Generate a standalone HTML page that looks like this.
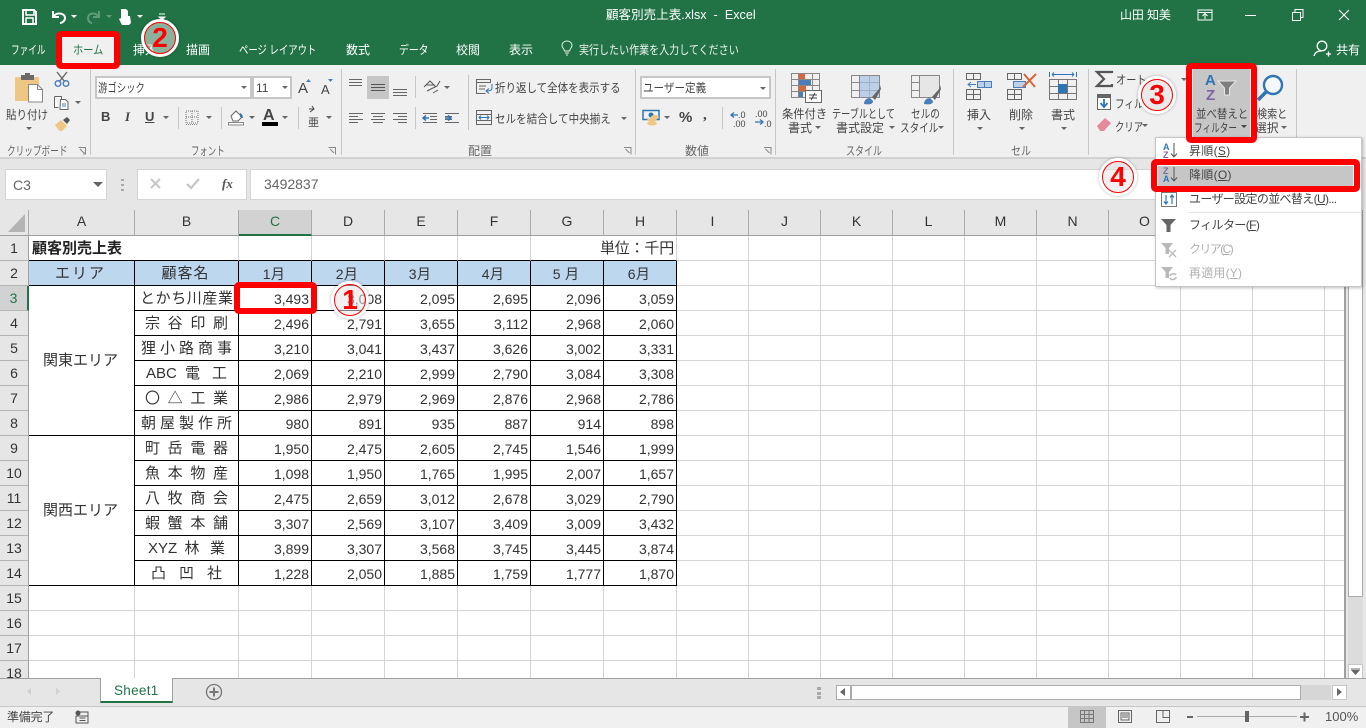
<!DOCTYPE html>
<html lang="ja"><head><meta charset="utf-8"><title>顧客別売上表.xlsx - Excel</title>
<style>
*{box-sizing:border-box}
html,body{margin:0;padding:0;width:1366px;height:728px;overflow:hidden;background:#fff}
body{position:relative;font-family:"Liberation Sans","Noto Sans CJK JP",sans-serif;color:#444}
.a{position:absolute}
.t{position:absolute;white-space:nowrap;font-size:12px;line-height:16px;color:#444;letter-spacing:-.6px;transform-origin:0 0}
.x{letter-spacing:0}
.w{color:#fff}
.h{position:absolute;top:210px;height:26px;background:#e6e6e6;border-right:1px solid #ababab;border-bottom:1px solid #9f9f9f;text-align:center;font-size:14px;line-height:23px;color:#333}
.r{position:absolute;left:0;width:29px;height:25px;background:#e6e6e6;border-right:1px solid #9f9f9f;border-bottom:1px solid #b4b4b4;text-align:center;font-size:14px;line-height:24px;color:#333}
table{position:absolute;left:29px;top:236px;border-collapse:separate;border-spacing:0;table-layout:fixed;width:1316px;font-size:14px;color:#333}
td{height:25px;padding:1px 2px 0 0;border-right:1px solid #d4d4d4;border-bottom:1px solid #d4d4d4;white-space:nowrap;line-height:20px;overflow:visible}
td.k{border-right:1px solid #000;border-bottom:1px solid #000;text-align:right}
td.hd{background:#bdd7ee;text-align:center;border-right:1px solid #000;border-bottom:1px solid #000;letter-spacing:.3px}
td.j{text-align:justify;text-align-last:justify;border-right:1px solid #000;border-bottom:1px solid #000;font-size:15px}
td.ar{border-right:1px solid #000;border-bottom:1px solid #000;text-align:center;font-size:15px;letter-spacing:0}
.red{position:absolute;border:6px solid #f00;border-radius:5px}
.bd{position:absolute;width:38px;height:38px;border-radius:50%;background:rgba(230,230,230,.55);border:3px solid #fff;box-shadow:0 0 3px rgba(0,0,0,.3);text-align:center;font:bold 28px/30px "Liberation Sans",sans-serif;color:#f00}
.bd i{position:absolute;left:0;top:0;width:32px;height:32px;border:1.5px solid #f00;border-radius:50%;display:block;font-style:normal;line-height:29px}
.sep{position:absolute;width:1px;background:#c6c6c6}
.box{position:absolute;background:#fff;border:2px solid #c6c6c6}
</style></head><body>

<!-- title + tabs -->
<div class="a" style="left:0;top:0;width:1366px;height:65px;background:#217346"></div>
<div class="a" style="left:62px;top:37px;width:52px;height:28px;background:#f0f0f0"></div>
<span class="t w" style="left:606px;top:7px;font-size:12.5px;letter-spacing:.05px">顧客別売上表.xlsx&nbsp; -&nbsp; Excel</span>
<span class="t w" style="left:1120px;top:7px;letter-spacing:-.1px">山田 知美</span>
<span class="t w x" style="left:11px;top:42px;transform:scaleX(.72)">ファイル</span>
<span class="t x" style="left:73px;top:42px;color:#217346;transform:scaleX(.85)">ホーム</span>
<span class="t w x" style="left:133px;top:42px">挿入</span>
<span class="t w x" style="left:186px;top:42px">描画</span>
<span class="t w x" style="left:239px;top:42px;transform:scaleX(.78)">ページ レイアウト</span>
<span class="t w x" style="left:346px;top:42px">数式</span>
<span class="t w x" style="left:399px;top:42px;transform:scaleX(.82)">データ</span>
<span class="t w x" style="left:456px;top:42px">校閲</span>
<span class="t w x" style="left:509px;top:42px">表示</span>
<span class="t w x" style="left:579px;top:42px;transform:scaleX(.835);opacity:.92">実行したい作業を入力してください</span>
<span class="t w x" style="left:1336px;top:42px">共有</span>

<!-- ribbon -->
<div class="a" style="left:0;top:65px;width:1366px;height:94px;background:#f0f0f0;border-bottom:2px solid #d2d2d2"></div>
<div class="a" style="left:0;top:159px;width:1366px;height:51px;background:#e6e6e6"></div>
<div class="sep" style="left:90px;top:69px;height:86px"></div>
<div class="sep" style="left:341px;top:69px;height:86px"></div>
<div class="sep" style="left:635px;top:69px;height:86px"></div>
<div class="sep" style="left:775px;top:69px;height:86px"></div>
<div class="sep" style="left:953px;top:69px;height:86px"></div>
<div class="sep" style="left:1088px;top:69px;height:86px"></div>
<div class="sep" style="left:1296px;top:69px;height:86px"></div>
<div class="sep" style="left:178px;top:107px;height:22px"></div>
<div class="sep" style="left:221px;top:107px;height:22px"></div>
<div class="sep" style="left:298px;top:107px;height:22px"></div>
<div class="sep" style="left:415px;top:76px;height:22px"></div>
<div class="sep" style="left:415px;top:107px;height:22px"></div>
<div class="sep" style="left:468px;top:75px;height:55px"></div>
<div class="sep" style="left:722px;top:107px;height:22px"></div>
<div class="a" style="left:367px;top:76px;width:22px;height:23px;background:#c6c6c6"></div>
<div class="box" style="left:95px;top:76px;width:157px;height:23px"></div>
<div class="box" style="left:252px;top:76px;width:40px;height:23px"></div>
<div class="box" style="left:640px;top:76px;width:131px;height:23px"></div>
<span class="t x" style="left:98px;top:80px;transform:scaleX(.78)">游ゴシック</span>
<span class="t x" style="left:256px;top:80px">11</span>
<span class="t x" style="left:643px;top:80px;transform:scaleX(.88)">ユーザー定義</span>
<span class="t x" style="left:6px;top:107px;transform:scaleX(.875)">貼り付け</span>
<span class="t x" style="left:7px;top:143px;color:#666;transform:scaleX(.72)">クリップボード</span>
<span class="t x" style="left:191px;top:143px;color:#666;transform:scaleX(.7)">フォント</span>
<span class="t x" style="left:468px;top:143px;color:#666">配置</span>
<span class="t x" style="left:685px;top:143px;color:#666">数値</span>
<span class="t x" style="left:846px;top:143px;color:#666;transform:scaleX(.75)">スタイル</span>
<span class="t x" style="left:1011px;top:143px;color:#666;transform:scaleX(.83)">セル</span>
<span class="a" style="left:101px;top:110px;font:bold 13px/14px 'Liberation Sans';color:#444">B</span>
<span class="a" style="left:125px;top:110px;font:italic bold 13px/14px 'Liberation Serif';color:#444">I</span>
<span class="a" style="left:145px;top:110px;font:bold 13px/14px 'Liberation Sans';color:#444;text-decoration:underline">U</span>
<span class="a" style="left:298px;top:79px;font:15px/20px 'Liberation Sans';color:#444">A</span>
<span class="a" style="left:321px;top:81px;font:13px/18px 'Liberation Sans';color:#444">A</span>
<span class="a" style="left:263px;top:107px;font:bold 16px/17px 'Liberation Sans';color:#444">A</span>
<span class="a" style="left:308px;top:116px;font:11px/12px 'Noto Sans CJK JP';color:#444">亜</span>
<span class="t x" style="left:495px;top:80px;transform:scaleX(.875)">折り返して全体を表示する</span>
<span class="t x" style="left:495px;top:111px;transform:scaleX(.88)">セルを結合して中央揃え</span>
<span class="t" style="left:679px;top:110px;font:bold 15px/16px 'Liberation Sans';letter-spacing:0">%</span>
<span class="t" style="left:703px;top:107px;font:bold 15px/16px 'Liberation Serif';letter-spacing:0">,</span>
<span class="t x" style="left:782px;top:106px;transform:scaleX(.94)">条件付き</span>
<span class="t x" style="left:788px;top:120px">書式</span>
<span class="t x" style="left:832px;top:106px;transform:scaleX(.76)">テーブルとして</span>
<span class="t x" style="left:836px;top:120px">書式設定</span>
<span class="t x" style="left:911px;top:106px;transform:scaleX(.8)">セルの</span>
<span class="t x" style="left:900px;top:120px;transform:scaleX(.8)">スタイル</span>
<span class="t x" style="left:967px;top:107px">挿入</span>
<span class="t x" style="left:1009px;top:107px">削除</span>
<span class="t x" style="left:1051px;top:107px">書式</span>
<span class="t x" style="left:1116px;top:72px;transform:scaleX(.85)">オート</span>
<span class="t x" style="left:1115px;top:96px;transform:scaleX(.8)">フィル</span>
<span class="t x" style="left:1115px;top:119px;transform:scaleX(.78)">クリア</span>
<span class="t x" style="left:1257px;top:106px;transform:scaleX(.84)">検索と</span>
<span class="t x" style="left:1255px;top:120px;transform:scaleX(.98)">選択</span>

<!-- formula bar -->
<div class="a" style="left:5px;top:169px;width:102px;height:31px;background:#fff;border:1px solid #d4d4d4"></div>
<span class="t" style="left:13px;top:177px;font-size:14px;letter-spacing:0;color:#666">C3</span>
<div class="a" style="left:137px;top:169px;width:110px;height:31px;background:#fff;border:1px solid #d4d4d4"></div>
<div class="a" style="left:250px;top:169px;width:1095px;height:31px;background:#fff;border:1px solid #d4d4d4"></div>
<span class="t" style="left:264px;top:176px;font-size:14px;letter-spacing:0;color:#666">3492837</span>
<span class="a" style="left:222px;top:176px;font:italic bold 13px/16px 'Liberation Serif';color:#555">fx</span>

<!-- column headers -->
<div class="h" style="left:0;width:29px"></div>
<div class="h" style="left:29px;width:106px">A</div>
<div class="h" style="left:135px;width:104px">B</div>
<div class="h" style="left:239px;width:73px;background:#d2d2d2;color:#217346;border-bottom:2px solid #217346">C</div>
<div class="h" style="left:312px;width:73px">D</div>
<div class="h" style="left:385px;width:73px">E</div>
<div class="h" style="left:458px;width:73px">F</div>
<div class="h" style="left:531px;width:73px">G</div>
<div class="h" style="left:604px;width:73px">H</div>
<div class="h" style="left:677px;width:72px">I</div>
<div class="h" style="left:749px;width:72px">J</div>
<div class="h" style="left:821px;width:72px">K</div>
<div class="h" style="left:893px;width:72px">L</div>
<div class="h" style="left:965px;width:72px">M</div>
<div class="h" style="left:1037px;width:72px">N</div>
<div class="h" style="left:1109px;width:72px">O</div>
<div class="h" style="left:1181px;width:72px">P</div>
<div class="h" style="left:1253px;width:72px">Q</div>
<div class="h" style="left:1325px;width:21px"></div>

<!-- row headers -->
<div class="r" style="top:236px">1</div><div class="r" style="top:261px">2</div>
<div class="r" style="top:286px;background:#d2d2d2;color:#217346;border-right:2px solid #217346">3</div>
<div class="r" style="top:311px">4</div><div class="r" style="top:336px">5</div><div class="r" style="top:361px">6</div>
<div class="r" style="top:386px">7</div><div class="r" style="top:411px">8</div><div class="r" style="top:436px">9</div>
<div class="r" style="top:461px">10</div><div class="r" style="top:486px">11</div><div class="r" style="top:511px">12</div>
<div class="r" style="top:536px">13</div><div class="r" style="top:561px">14</div><div class="r" style="top:586px">15</div>
<div class="r" style="top:611px">16</div><div class="r" style="top:636px">17</div><div class="r" style="top:661px">18</div>

<!-- sheet grid -->
<table><colgroup><col style="width:106px"><col style="width:104px"><col style="width:73px"><col style="width:73px"><col style="width:73px"><col style="width:73px"><col style="width:73px"><col style="width:73px"><col style="width:72px"><col style="width:72px"><col style="width:72px"><col style="width:72px"><col style="width:72px"><col style="width:72px"><col style="width:72px"><col style="width:72px"><col style="width:92px"></colgroup>
<tr><td style="border-bottom:1px solid #000;border-right:0;padding-left:3px;font-weight:bold;font-size:15px;color:#222">顧客別売上表</td><td style="border-bottom:1px solid #000"></td><td style="border-bottom:1px solid #000"></td><td style="border-bottom:1px solid #000"></td><td style="border-bottom:1px solid #000"></td><td style="border-bottom:1px solid #000"></td><td style="border-bottom:1px solid #000;border-right:0"></td><td style="border-bottom:1px solid #000"></td><td></td><td></td><td></td><td></td><td></td><td></td><td></td><td></td><td></td></tr>
<tr><td class="hd" style="letter-spacing:2px;font-size:15px">エリア</td><td class="hd" style="letter-spacing:1px;font-size:15px">顧客名</td><td class="hd">1月</td><td class="hd">2月</td><td class="hd">3月</td><td class="hd">4月</td><td class="hd">5 月</td><td class="hd">6月</td><td></td><td></td><td></td><td></td><td></td><td></td><td></td><td></td><td></td></tr>
<tr><td class="ar" rowspan="6">関東エリア</td><td class="j" style="padding:1px 5px 0">とかち川産業</td><td class="k">3,493</td><td class="k">3,008</td><td class="k">2,095</td><td class="k">2,695</td><td class="k">2,096</td><td class="k">3,059</td><td></td><td></td><td></td><td></td><td></td><td></td><td></td><td></td><td></td></tr>
<tr><td class="j" style="padding:1px 10px 0">宗谷印刷</td><td class="k">2,496</td><td class="k">2,791</td><td class="k">3,655</td><td class="k">3,112</td><td class="k">2,968</td><td class="k">2,060</td><td></td><td></td><td></td><td></td><td></td><td></td><td></td><td></td><td></td></tr>
<tr><td class="j" style="padding:1px 6px 0">狸小路商事</td><td class="k">3,210</td><td class="k">3,041</td><td class="k">3,437</td><td class="k">3,626</td><td class="k">3,002</td><td class="k">3,331</td><td></td><td></td><td></td><td></td><td></td><td></td><td></td><td></td><td></td></tr>
<tr><td class="j" style="padding:1px 11px 0">ABC 電 工</td><td class="k">2,069</td><td class="k">2,210</td><td class="k">2,999</td><td class="k">2,790</td><td class="k">3,084</td><td class="k">3,308</td><td></td><td></td><td></td><td></td><td></td><td></td><td></td><td></td><td></td></tr>
<tr><td class="j" style="padding:1px 10px 0">〇△工業</td><td class="k">2,986</td><td class="k">2,979</td><td class="k">2,969</td><td class="k">2,876</td><td class="k">2,968</td><td class="k">2,786</td><td></td><td></td><td></td><td></td><td></td><td></td><td></td><td></td><td></td></tr>
<tr><td class="j" style="padding:1px 6px 0">朝屋製作所</td><td class="k">980</td><td class="k">891</td><td class="k">935</td><td class="k">887</td><td class="k">914</td><td class="k">898</td><td></td><td></td><td></td><td></td><td></td><td></td><td></td><td></td><td></td></tr>
<tr><td class="ar" rowspan="6">関西エリア</td><td class="j" style="padding:1px 10px 0">町岳電器</td><td class="k">1,950</td><td class="k">2,475</td><td class="k">2,605</td><td class="k">2,745</td><td class="k">1,546</td><td class="k">1,999</td><td></td><td></td><td></td><td></td><td></td><td></td><td></td><td></td><td></td></tr>
<tr><td class="j" style="padding:1px 10px 0">魚本物産</td><td class="k">1,098</td><td class="k">1,950</td><td class="k">1,765</td><td class="k">1,995</td><td class="k">2,007</td><td class="k">1,657</td><td></td><td></td><td></td><td></td><td></td><td></td><td></td><td></td><td></td></tr>
<tr><td class="j" style="padding:1px 10px 0">八牧商会</td><td class="k">2,475</td><td class="k">2,659</td><td class="k">3,012</td><td class="k">2,678</td><td class="k">3,029</td><td class="k">2,790</td><td></td><td></td><td></td><td></td><td></td><td></td><td></td><td></td><td></td></tr>
<tr><td class="j" style="padding:1px 10px 0">蝦蟹本舗</td><td class="k">3,307</td><td class="k">2,569</td><td class="k">3,107</td><td class="k">3,409</td><td class="k">3,009</td><td class="k">3,432</td><td></td><td></td><td></td><td></td><td></td><td></td><td></td><td></td><td></td></tr>
<tr><td class="j" style="padding:1px 13px 0">XYZ 林 業</td><td class="k">3,899</td><td class="k">3,307</td><td class="k">3,568</td><td class="k">3,745</td><td class="k">3,445</td><td class="k">3,874</td><td></td><td></td><td></td><td></td><td></td><td></td><td></td><td></td><td></td></tr>
<tr><td class="j" style="padding:1px 16px 0">凸凹社</td><td class="k">1,228</td><td class="k">2,050</td><td class="k">1,885</td><td class="k">1,759</td><td class="k">1,777</td><td class="k">1,870</td><td></td><td></td><td></td><td></td><td></td><td></td><td></td><td></td><td></td></tr>
<tr><td></td><td></td><td></td><td></td><td></td><td></td><td></td><td></td><td></td><td></td><td></td><td></td><td></td><td></td><td></td><td></td><td></td></tr>
<tr><td></td><td></td><td></td><td></td><td></td><td></td><td></td><td></td><td></td><td></td><td></td><td></td><td></td><td></td><td></td><td></td><td></td></tr>
<tr><td></td><td></td><td></td><td></td><td></td><td></td><td></td><td></td><td></td><td></td><td></td><td></td><td></td><td></td><td></td><td></td><td></td></tr>
<tr><td></td><td></td><td></td><td></td><td></td><td></td><td></td><td></td><td></td><td></td><td></td><td></td><td></td><td></td><td></td><td></td><td></td></tr>
</table>
<span class="t" style="left:600px;top:239px;font-size:15px;line-height:20px;letter-spacing:-.2px;color:#333">単位：千円</span>
<div class="a" style="left:1324px;top:235px;width:1px;height:445px;background:#d4d4d4"></div>

<!-- scroll gutter, bottom bars -->
<div class="a" style="left:1344px;top:210px;width:22px;height:470px;background:#e6e6e6;border-left:2px solid #a0a0a0"></div>
<div class="a" style="left:1348px;top:210px;width:15px;height:387px;background:#fff;border:1px solid #ababab"></div>
<div class="a" style="left:1348px;top:597px;width:15px;height:67px;background:#dcdcdc"></div>
<div class="a" style="left:1348px;top:664px;width:15px;height:15px;background:#fff;border:1px solid #c6c6c6"></div>
<div class="a" style="left:0;top:678px;width:1366px;height:29px;background:#e6e6e6;border-top:1px solid #9f9f9f;border-bottom:1px solid #c6c6c6"></div>
<div class="a" style="left:100px;top:678px;width:73px;height:25px;background:#fff;border:1px solid #9f9f9f;border-top:0;border-bottom:2px solid #217346"></div>
<span class="t" style="left:114px;top:683px;font-size:13.5px;letter-spacing:.3px;color:#217346">Sheet1</span>
<div class="a" style="left:836px;top:685px;width:15px;height:15px;background:#fff;border:1px solid #ababab"></div>
<div class="a" style="left:851px;top:685px;width:450px;height:15px;background:#fff;border:1px solid #ababab"></div>
<div class="a" style="left:1301px;top:685px;width:30px;height:15px;background:#d6d6d6"></div>
<div class="a" style="left:1332px;top:685px;width:15px;height:15px;background:#fff;border:1px solid #c6c6c6"></div>
<div class="a" style="left:0;top:707px;width:1366px;height:21px;background:#f0f0f0"></div>
<div class="a" style="left:1068px;top:706px;width:38px;height:22px;background:#c6c6c6"></div>
<span class="t" style="left:7px;top:709px;letter-spacing:-.2px">準備完了</span>
<span class="t" style="left:1325px;top:709px;font-size:13px;letter-spacing:0;color:#555">100%</span>

<!-- icons -->
<svg class="a" style="left:0;top:0" width="1366" height="728" viewBox="0 0 1366 728" fill="none">
<!-- qat -->
<path d="M23 10h11l2 2v12H23z" stroke="#fff" stroke-width="2"/><path d="M26 10h8v5h-8zM26 24v-6h7v6" stroke="#fff" stroke-width="1.5"/>
<path d="M53 11v6h6" stroke="#fff" stroke-width="2"/><path d="M54 16c3-4 11-3 11 2 0 3-3 5-5 5" stroke="#fff" stroke-width="2"/>
<path d="M99 11v6h-6" stroke="#5f9c7b" stroke-width="2"/><path d="M98 16c-3-4-10-3-10 2 0 3 2 5 4 5" stroke="#5f9c7b" stroke-width="2"/>
<path d="M121 9h5l2 2v5h2l1 7-2 2h-7l-3-6 2-1z" fill="#fff"/>
<path d="M71 15h6l-3 3zM106 15h6l-3 3z" fill="#5f9c7b"/><path d="M71 15h6l-3 3zM137 15h6l-3 3z" fill="#fff"/>
<path d="M159 14h6M159 17h6l-3 3z" stroke="#fff" fill="#fff"/>
<!-- window controls -->
<path d="M1198 10h14v10h-14zM1198 12.500h14M1205 19v-5M1202.500 16l2.500-2.500 2.500 2.500" stroke="#fff"/>
<path d="M1245 15.500h11" stroke="#fff"/><path d="M1292.500 12.500h8v8h-8zM1295 12v-2.500h8v8h-2" stroke="#fff"/>
<path d="M1339 10l10 10M1349 10l-10 10" stroke="#fff" stroke-width="1.100"/>
<circle cx="1322" cy="46" r="4.800" stroke="#fff" stroke-width="1.300"/><path d="M1314 56c1-4 4-5 7-5M1326 54h5M1328.500 51.500v5" stroke="#fff" stroke-width="1.300"/>
<path d="M567 41c-3 0-5 2-5 4.500 0 2 2 3 2.500 5.500h5c.5-2.500 2.500-3.500 2.500-5.500 0-2.500-2-4.500-5-4.500zM565 53h4M566 55h2" stroke="#e6f0ea"/>
<!-- clipboard -->
<rect x="15" y="77" width="24" height="24" rx="1" fill="#eec784"/><rect x="21" y="75" width="13" height="5" fill="#6a6a6a"/><rect x="25" y="73" width="5" height="3" fill="#6a6a6a"/>
<path d="M28.500 84.500h9l5 5v12.500h-14z" fill="#fff" stroke="#888"/><path d="M37.500 84.500v5h5" stroke="#888"/>
<path d="M57 72l8 10M67 72l-8 10" stroke="#666" stroke-width="1.400"/><circle cx="58" cy="83.500" r="2.800" stroke="#4a7ebb" stroke-width="1.400"/><circle cx="66" cy="83.500" r="2.800" stroke="#4a7ebb" stroke-width="1.400"/>
<path d="M54.500 96.500h7l0 3M54.500 96.500v11h4M60.500 99.500h5l2.500 2.500v7.500h-8z" stroke="#666" fill="#fff"/><path d="M62 104h4M62 106h4" stroke="#4a7ebb"/>
<path d="M55 125l6-5 6 6-5 5c-3 1-5-3-7-6z" fill="#eec784"/><path d="M63 120l4-3 3 3-3 4z" fill="#555"/>
<!-- drop triangles -->
<path d="M26 127h6l-3 3zM75 101h6l-3 3zM241 86h6l-3 3zM282 86h6l-3 3zM163 116h6l-3 3zM206 116h6l-3 3zM249 116h6l-3 3zM282 116h6l-3 3zM326 116h6l-3 3zM444 86h6l-3 3zM621 117h6l-3 3zM760 87h6l-3 3zM664 116h6l-3 3zM815 126h6l-3 3zM889 126h6l-3 3zM938 126h6l-3 3zM977 127h6l-3 3zM1019 127h6l-3 3zM1061 127h6l-3 3zM1142 124h6l-3 3zM1181 78h6l-3 3zM1281 126h6l-3 3zM93 182h10l-5 5zM1351 670h9l-4.500 5z" fill="#666"/>
<path d="M1351 669h9" stroke="#666"/>
<path d="M121 179h3v2h-3zM121 184h3v2h-3zM121 189h3v2h-3zM817 687h4v3h-4zM817 692h4v3h-4zM817 696h4v3h-4z" fill="#aaa"/>
<path d="M306 82l2.500-3 2.500 3zM328 79h5l-2.500 3z" fill="#4a7ebb"/>
<!-- borders, fill, color -->
<path d="M186 111h12v12h-12zM192 111v12M186 117h12" stroke="#777" stroke-dasharray="1 1"/><path d="M186 124.500h12" stroke="#888" stroke-dasharray="1 1"/>
<path d="M231 116l5-5 6 6-4 4h-5z" stroke="#666" fill="#fff"/><path d="M240 113c2 1 3 3 3 5l-3-1z" fill="#2e75b6"/><path d="M228.500 122.500h15v2.500h-15z" stroke="#888" fill="#fff"/>
<rect x="262" y="122" width="16" height="4" fill="#000"/>
<path d="M309 109h5M312 106l2 3-4 3" stroke="#444"/>
<!-- align -->
<path d="M349 79.500h13M349 82.500h13M349 85.500h13" stroke="#666"/><path d="M371 84.500h14M371 87.500h14M371 90.500h14" stroke="#555"/><path d="M393 89.500h14M393 92.500h14M393 95.500h14" stroke="#666"/>
<path d="M349 113.500h14M349 116.500h9M349 119.500h14M349 122.500h9M371 113.500h14M373 116.500h10M371 119.500h14M373 122.500h10M393 113.500h14M398 116.500h9M393 119.500h14M398 122.500h9" stroke="#666"/>
<path d="M423 113.500h14M430 116.500h7M430 119.500h7M423 122.500h14M445 113.500h14M445 116.500h7M445 119.500h7M445 122.500h14" stroke="#666"/><path d="M429 118h-6M426 115.500l-3 2.500 3 2.500" stroke="#2e75b6" stroke-width="1.500"/><path d="M445 118h6M448 115.500l3 2.500-3 2.500" stroke="#2e75b6" stroke-width="1.500"/>
<path d="M424 87l6-6 6 6M426 85h8" stroke="#555"/><path d="M427 91l10-5 3-5M433 93l5-3" stroke="#555"/>
<!-- wrap + merge -->
<path d="M476.500 79.500h14v3h-14zM476.500 82.500v11h9M479 86h7M479 89h6" stroke="#666"/><path d="M492 84v4c0 2-2 3-5 3M489 88.500l-3 2.500 3 2.500" stroke="#2e75b6"/>
<path d="M476.500 110.500h15v14h-15zM476.500 114.500h15M476.500 120.500h15" stroke="#666"/><path d="M479 117.500h10M481 115.500l-2 2 2 2M487 115.500l2 2-2 2" stroke="#2e75b6"/>
<!-- number -->
<rect x="643" y="110.500" width="16" height="9" stroke="#2e75b6" stroke-width="1.500"/><circle cx="651" cy="115" r="2.500" fill="#2e75b6"/><ellipse cx="652" cy="120" rx="5" ry="2" fill="#eec784"/><ellipse cx="652" cy="123.500" rx="5" ry="2" fill="#eec784"/><ellipse cx="655" cy="117" rx="4" ry="2" fill="#eec784"/>
<path d="M731 115h7M734 112.500l-3 2.500 3 2.500M755 122h8M760 119.500l3 2.500-3 2.500" stroke="#2e75b6" stroke-width="1.300"/>
<text x="738" y="118" font-size="9" fill="#444" font-family="Liberation Sans">.0</text><text x="733" y="127" font-size="9" fill="#444" font-family="Liberation Sans">.00</text><text x="755" y="117" font-size="9" fill="#444" font-family="Liberation Sans">.00</text><text x="764" y="127" font-size="9" fill="#444" font-family="Liberation Sans">.0</text>
<!-- cond fmt -->
<path d="M791.500 73.500h28v24h-28zM791.500 79.500h28M791.500 85.500h28M791.500 91.500h28M798.500 73.500v24M812.500 73.500v24" stroke="#888"/><rect x="799" y="74" width="6" height="5" fill="#d9653b"/><rect x="799" y="80" width="12" height="5" fill="#4a7ebb"/><rect x="799" y="86" width="7" height="5" fill="#d9653b"/><rect x="799" y="92" width="4" height="5" fill="#4a7ebb"/>
<rect x="805.500" y="90.500" width="16" height="12" fill="#fff" stroke="#666"/><path d="M809 95h8M809 98h8M815 93l-4 7" stroke="#444"/>
<!-- table -->
<path d="M851.500 75.500h28v22h-28zM851.500 82.500h28M851.500 90.500h28M859.500 75.500v22M869.500 75.500v22" stroke="#888"/><rect x="860" y="76" width="19" height="21" fill="#bcd1e8"/><path d="M869.500 75.500v22M860 82.500h19M860 90.500h19" stroke="#9fb0c4"/><path d="M864 104c0-4 3-6 6-6l3 3c0 3-3 4-9 3z" fill="#4a7ebb"/><path d="M872 97l7-8 1-4 1 4-6 11z" fill="#666"/>
<!-- cell style -->
<path d="M911.500 75.500h28v22h-28zM911.500 82.500h28M911.500 90.500h28M919.500 75.500v22M929.500 75.500v22" stroke="#888"/><rect x="920" y="76" width="19" height="21" fill="#e6e6e6"/><path d="M924 104c0-4 3-6 6-6l3 3c0 3-3 4-9 3z" fill="#4a7ebb"/><path d="M932 97l7-8 1-4 1 4-6 11z" fill="#666"/>
<!-- insert -->
<path d="M966.500 73.500h14v6h-14zM973.500 73.500v6M966.500 89.500h14v10h-14zM973.500 89.500v10M966.500 94.500h14" stroke="#666"/><rect x="977.500" y="81.500" width="14" height="6" fill="#bcd1e8" stroke="#4a7ebb"/><path d="M984.500 81.500v6M968 84.500h8M971 82l-3 2.500 3 2.500" stroke="#4a7ebb"/>
<!-- delete -->
<path d="M1007.500 73.500h14v6h-14zM1014.500 73.500v6M1007.500 89.500h14v10h-14zM1014.500 89.500v10M1007.500 94.500h14" stroke="#666"/><rect x="1013.500" y="81.500" width="12" height="6" fill="#bcd1e8" stroke="#4a7ebb"/><path d="M1024 74l11 13M1036 74l-13 13" stroke="#d9653b" stroke-width="2"/>
<!-- format -->
<path d="M1049.500 79.500h27v20h-27zM1049.500 86.500h27M1049.500 93.500h27M1058.500 79.500v20M1067.500 79.500v20" stroke="#777"/><rect x="1058" y="84" width="9" height="9" fill="#2e75b6"/><path d="M1049.500 72v5M1076.500 72v5M1052 74.500h22M1052 74.500l2-2M1052 74.500l2 2M1074 74.500l-2-2M1074 74.500l-2 2" stroke="#2e75b6"/>
<!-- sigma, fill, eraser -->
<path d="M1112 73v-1h-15l7 7-7 7h15v-2" stroke="#555" stroke-width="2.200"/>
<rect x="1097.500" y="94.500" width="13" height="15" fill="#fff" stroke="#666"/><rect x="1097" y="94" width="14" height="4" fill="#666"/><path d="M1104 99v7M1100.500 103l3.500 4 3.500-4" stroke="#2e75b6" stroke-width="1.800"/>
<path d="M1097 126l8-8 6 5-7 8h-4z" fill="#e58a9a"/>
<!-- sort and filter -->
<rect x="1193" y="69" width="57" height="68" fill="#c6c6c6"/>
<text x="1205" y="85" font-family="Liberation Sans" font-weight="bold" font-size="15" fill="#2e75b6">A</text>
<text x="1206" y="100" font-family="Liberation Sans" font-weight="bold" font-size="15" fill="#8064a2">Z</text>
<path d="M1218 81h18l-6.500 7v7h-5v-7z" fill="#7f7f7f" stroke="#e6e6e6"/>
<!-- magnifier -->
<circle cx="1273" cy="85" r="9" fill="#f4f8fc" stroke="#2e75b6" stroke-width="2.400"/><path d="M1266 92l-8 8" stroke="#2e75b6" stroke-width="3.500"/>
<!-- launchers -->
<path d="M78.500 147.500h7v7M80 149l4 4M83 154h2v-2" stroke="#888"/><path d="M328.500 147.500h7v7M330 149l4 4" stroke="#888"/><path d="M624 147.500h7v7M625.500 149l4 4" stroke="#888"/><path d="M764 147.500h7v7M765.500 149l4 4" stroke="#888"/>
<!-- formula -->
<path d="M151 179l9 9M160 179l-9 9" stroke="#c6c6c6" stroke-width="2"/><path d="M187 184l4 4 8-9" stroke="#c6c6c6" stroke-width="2.200"/>
<path d="M25 214v18H8z" fill="#b4b4b4"/>
<path d="M31 688v7l-4-3.500zM56 688v7l4-3.500z" fill="#d0d0d0"/>
<circle cx="214" cy="692" r="7.500" stroke="#777" stroke-width="1.300"/><path d="M209.500 692h9M214 687.500v9" stroke="#777" stroke-width="2"/>
<path d="M845 688v8l-5-4zM1337 688v8l5-4z" fill="#666"/>
<!-- status icons -->
<circle cx="78" cy="713" r="2.500" fill="#555"/><path d="M80 712h8v11H76v-7h12M79.500 718h6M79.500 720.500h6" stroke="#555"/>
<path d="M1080.500 710.500h13v12h-13zM1084.500 710.500v12M1089 710.500v12M1080.500 714.500h13M1080.500 718.500h13" stroke="#777"/>
<path d="M1118.500 710.500h13v12h-13zM1121 713h8v7h-8zM1122 715h6M1122 717h6" stroke="#666"/>
<path d="M1156.500 710.500h13v12h-13zM1163 710.500v7h6.500" stroke="#666"/>
<path d="M1187 717h6" stroke="#666" stroke-width="2"/><path d="M1197 716.500h100" stroke="#aaa"/><rect x="1245" y="711" width="4" height="11" fill="#666"/><path d="M1300 717h9M1304.500 712.500v9" stroke="#666" stroke-width="2"/>
</svg>

<span class="t x" style="left:1196px;top:106px;transform:scaleX(.87);z-index:2">並べ替えと</span>
<span class="t x" style="left:1194px;top:120px;transform:scaleX(.72);z-index:2">フィルター</span>
<svg class="a" style="left:1240px;top:124px;z-index:2" width="10" height="6"><path d="M1 1h6l-3 3z" fill="#444"/></svg>

<!-- dropdown menu -->
<div class="a" style="left:1155px;top:137px;width:207px;height:150px;background:#fff;border:1px solid #c6c6c6;box-shadow:1px 1px 3px rgba(0,0,0,.25)"></div>
<div class="a" style="left:1158px;top:166px;width:195px;height:20px;background:#c6c6c6"></div>
<div class="a" style="left:1189px;top:212px;width:172px;height:1px;background:#e1e1e1"></div>
<span class="t" style="left:1189px;top:143px;letter-spacing:.3px">昇順(<u>S</u>)</span>
<span class="t" style="left:1189px;top:167px;letter-spacing:.3px">降順(<u>O</u>)</span>
<span class="t" style="left:1189px;top:191px;letter-spacing:-.65px">ユーザー設定の並べ替え(<u>U</u>)...</span>
<span class="t" style="left:1189px;top:217px;letter-spacing:-.6px">フィルター(<u>F</u>)</span>
<span class="t" style="left:1189px;top:241px;letter-spacing:-1.6px;color:#b1b1b1">クリア(<u>C</u>)</span>
<span class="t" style="left:1189px;top:265px;letter-spacing:.2px;color:#b1b1b1">再適用(<u>Y</u>)</span>
<svg class="a" style="left:0;top:0;z-index:3;pointer-events:none" width="1366" height="728" viewBox="0 0 1366 728" fill="none">
<text x="1163" y="150" font-family="Liberation Sans" font-weight="bold" font-size="9" fill="#2e75b6">A</text><text x="1163" y="158" font-family="Liberation Sans" font-weight="bold" font-size="9" fill="#8064a2">Z</text><path d="M1174 143v14M1171 153.500l3 3.500 3-3.500" stroke="#555"/>
<text x="1163" y="174" font-family="Liberation Sans" font-weight="bold" font-size="9" fill="#8064a2">Z</text><text x="1163" y="182" font-family="Liberation Sans" font-weight="bold" font-size="9" fill="#2e75b6">A</text><path d="M1174 167v14M1171 177.500l3 3.500 3-3.500" stroke="#555"/>
<rect x="1161.500" y="192.500" width="15" height="14" stroke="#777"/><path d="M1166 195v9M1164 201.500l2 2.500 2-2.500" stroke="#2e75b6" stroke-width="1.200"/><path d="M1172 204v-9M1170 197.500l2-2.500 2 2.500" stroke="#2e75b6" stroke-width="1.200"/>
<path d="M1161 219h15l-5.500 6v7h-4v-7z" fill="#666"/>
<path d="M1161 243h12l-4 5v6h-3.500v-6z" fill="#b9b9b9"/><path d="M1169 250l7 7M1176 250l-7 7" stroke="#b9b9b9" stroke-width="1.300"/>
<path d="M1161 267h12l-4 5v6h-3.500v-6z" fill="#b9b9b9"/><path d="M1170 276c0-2 5-3 6-1M1176 277c0 2-4 4-6 1" stroke="#b9b9b9" stroke-width="1.500"/>
</svg>

<!-- annotations -->
<div class="red" style="left:56px;top:31px;width:64px;height:38px;z-index:4"></div>
<div class="red" style="left:234px;top:282px;width:83px;height:32px;z-index:4"></div>
<div class="red" style="left:1186px;top:63px;width:71px;height:80px;z-index:4"></div>
<div class="red" style="left:1151px;top:159px;width:209px;height:33px;z-index:4"></div>
<div class="bd" style="left:141px;top:19px;z-index:5"><i>2</i></div>
<div class="bd" style="left:331px;top:281px;z-index:5"><i>1</i></div>
<div class="bd" style="left:1138px;top:76px;z-index:5"><i>3</i></div>
<div class="bd" style="left:1099px;top:158px;z-index:5"><i>4</i></div>
</body></html>
